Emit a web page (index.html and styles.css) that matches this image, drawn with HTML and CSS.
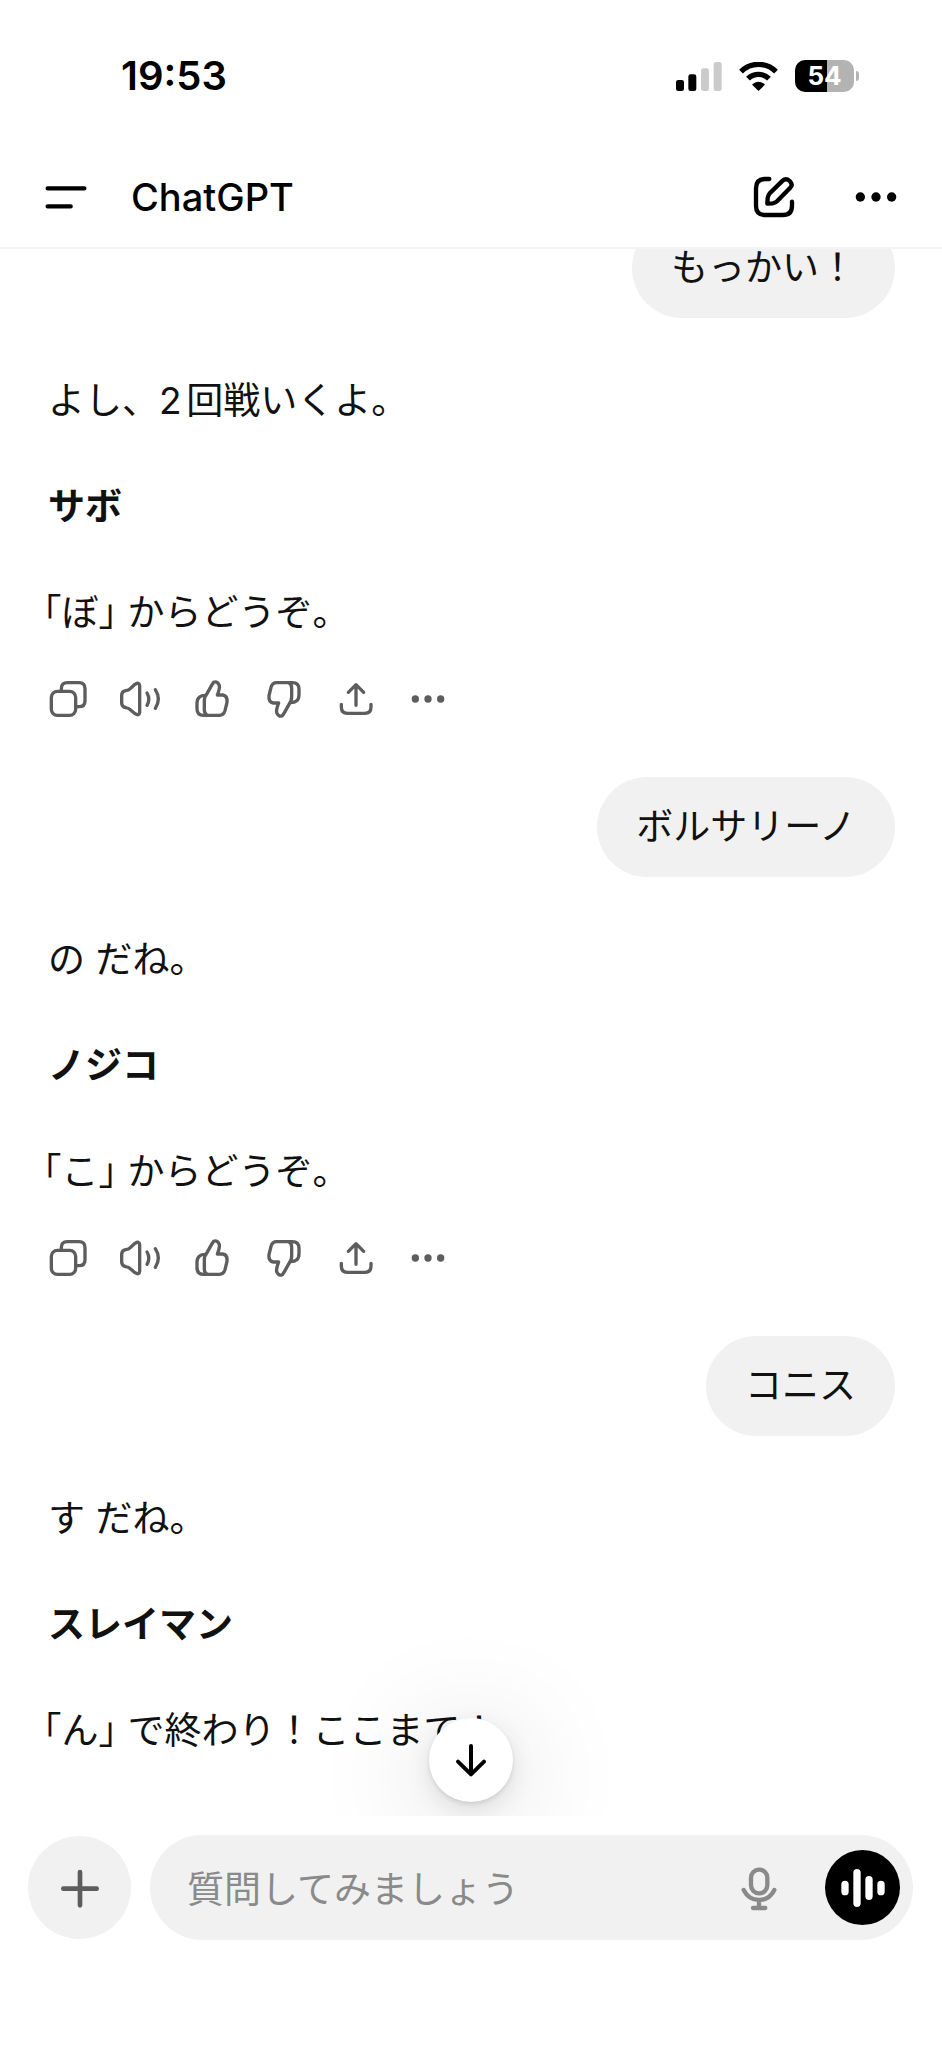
FILE: index.html
```html
<!DOCTYPE html>
<html lang="ja">
<head>
<meta charset="utf-8">
<meta name="viewport" content="width=device-width, initial-scale=1">
<title>ChatGPT</title>
<link rel="stylesheet" href="styles.css">
</head>
<body>
<svg class="sprite" aria-hidden="true">
  <symbol id="copy" viewBox="0 0 144 144"><rect x="22" y="49" width="73" height="72" rx="18"/><path d="M52 45V41Q52 23 70 23H105Q123 23 123 41V77Q123 95 105 95H99"/></symbol>
  <symbol id="speak" viewBox="0 0 144 144"><path d="M17 61Q17 49 29 47Q38 46 44 40L57 28Q70 20 71 32V112Q70 124 57 116L44 105Q38 99 29 98Q17 95 17 84Z"/><path d="M93 54Q104 72 93 91M118 44Q136 72 118 100"/></symbol>
  <symbol id="thumb" viewBox="0 0 144 144"><path d="M54 61Q27 60 27 85V101Q27 121 47 121H94Q107 121 111 107L117 82Q119 62 104 60H88Q96 40 94 31Q88 17 77 22L72 29L57 56Q49 65 49 78V105Q49 117 58 121"/></symbol>
  <symbol id="share" viewBox="0 0 144 144"><path d="M72 91V29M49 52L72 29L95 52M28 88V96Q28 115 46 115H99Q117 115 117 96V88"/></symbol>
  <symbol id="more" viewBox="0 0 144 144"><g fill="currentColor" stroke="none"><circle cx="34" cy="72" r="11"/><circle cx="72" cy="72" r="11"/><circle cx="110" cy="72" r="11"/></g></symbol>
</svg>

<header class="header">
  <div class="status">
    <time class="clock">19:53</time>
    <div class="indicators">
      <svg class="signal" viewBox="0 0 138 87"><g><rect y="54" width="24" height="33" rx="7"/><rect x="37" y="37" width="24" height="50" rx="7"/></g><g fill="#cbcbcb"><rect x="75" y="19" width="24" height="68" rx="7"/><rect x="113" width="24" height="87" rx="7"/></g></svg>
      <svg class="wifi" viewBox="0 0 117 87"><g fill="none" stroke="#000" stroke-width="16"><path d="M6 29A74 74 0 0 1 111 29"/><path d="M27 50A45 45 0 0 1 90 50"/></g><path d="M58.500 87L41 70Q38 67 42 65Q58.500 54 75 65Q79 67 76 70Z"/></svg>
      <div class="battery"><span class="level">54</span><span class="nub"></span></div>
    </div>
  </div>
  <nav class="nav">
    <button class="icon-button" aria-label="メニュー"><svg class="icon bold" viewBox="0 0 144 144"><path d="M17 46H127M17 100H86"/></svg></button>
    <h1 class="title">ChatGPT</h1>
    <button class="icon-button" aria-label="新しいチャット"><svg class="icon bold" viewBox="0 0 144 144"><path d="M58 18H46Q18 18 18 46V98Q18 126 46 126H98Q126 126 126 98V86"/><path d="M52 92L53 75Q54 66 60 60L98 23Q108 14 119 24Q130 35 120 45L84 82Q77 90 68 91Z"/></svg></button>
    <button class="icon-button" aria-label="その他"><svg class="icon" viewBox="0 0 144 144"><g fill="currentColor" stroke="none"><circle cx="25" cy="72" r="14"/><circle cx="72" cy="72" r="14"/><circle cx="119" cy="72" r="14"/></g></svg></button>
  </nav>
</header>

<main class="chat">
  <p class="bubble">もっかい！</p>
  <section class="reply">
    <p>よし、2回戦いくよ。</p>
    <p><strong>サボ</strong></p>
    <p class="quoted"><span class="quote">「ぼ」</span> からどうぞ。</p>
  </section>
  <div class="actions">
    <button class="icon-button" aria-label="コピー"><svg class="icon"><use href="#copy"/></svg></button>
    <button class="icon-button" aria-label="読み上げる"><svg class="icon"><use href="#speak"/></svg></button>
    <button class="icon-button" aria-label="良い回答"><svg class="icon"><use href="#thumb"/></svg></button>
    <button class="icon-button" aria-label="良くない回答"><svg class="icon flipped"><use href="#thumb"/></svg></button>
    <button class="icon-button" aria-label="共有"><svg class="icon"><use href="#share"/></svg></button>
    <button class="icon-button" aria-label="その他の操作"><svg class="icon"><use href="#more"/></svg></button>
  </div>
  <p class="bubble">ボルサリーノ</p>
  <section class="reply">
    <p>の だね。</p>
    <p><strong>ノジコ</strong></p>
    <p class="quoted"><span class="quote">「こ」</span> からどうぞ。</p>
  </section>
  <div class="actions">
    <button class="icon-button" aria-label="コピー"><svg class="icon"><use href="#copy"/></svg></button>
    <button class="icon-button" aria-label="読み上げる"><svg class="icon"><use href="#speak"/></svg></button>
    <button class="icon-button" aria-label="良い回答"><svg class="icon"><use href="#thumb"/></svg></button>
    <button class="icon-button" aria-label="良くない回答"><svg class="icon flipped"><use href="#thumb"/></svg></button>
    <button class="icon-button" aria-label="共有"><svg class="icon"><use href="#share"/></svg></button>
    <button class="icon-button" aria-label="その他の操作"><svg class="icon"><use href="#more"/></svg></button>
  </div>
  <p class="bubble">コニス</p>
  <section class="reply">
    <p>す だね。</p>
    <p><strong>スレイマン</strong></p>
    <p class="quoted"><span class="quote">「ん」</span> で終わり！ここまで！</p>
  </section>
  <button class="scroll-down" aria-label="一番下へ"><svg class="icon arrow" viewBox="0 0 144 144"><path d="M72 30V114M33 77L72 115L111 77"/></svg></button>
</main>

<form class="composer">
  <button class="add" type="button" aria-label="追加"><svg class="icon plus" viewBox="0 0 144 144"><path d="M72 24V124M22 74H122"/></svg></button>
  <div class="field">
    <input class="prompt" type="text" placeholder="質問してみましょう" aria-label="質問してみましょう">
    <button class="icon-button mic" type="button" aria-label="音声入力"><svg class="icon" viewBox="0 0 144 144"><rect x="48" y="17" width="49" height="71" rx="24"/><path d="M26 78C36 98 54 108 72 108S108 98 118 78M72 108V132M54 132H91"/></svg></button>
    <button class="voice" type="button" aria-label="音声モード"><svg class="icon wave" viewBox="0 0 144 144"><path d="M18 61V83M54 26V118M90 47V97M126 61V83"/></svg></button>
  </div>
</form>
</body>
</html>
```

FILE: styles.css
```css
* {
  box-sizing: border-box;
}

body {
  display: flex;
  flex-direction: column;
  height: 100vh;
  margin: 0;
  background: #fff;
  color: #111;
  font-family: Inter, "Noto Sans CJK JP", sans-serif;
  font-size: 37px;
  line-height: 60px;
  text-autospace: normal;
}

button {
  display: grid;
  place-items: center;
  flex: none;
  padding: 0;
  border: 0;
  background: none;
  color: inherit;
}

p,
h1 {
  margin: 0;
}

.sprite {
  position: absolute;
  width: 0;
  height: 0;
}

.icon {
  display: block;
  width: 48px;
  height: 48px;
  fill: none;
  stroke: currentColor;
  stroke-width: 10;
  stroke-linecap: round;
  stroke-linejoin: round;
}

.bold {
  stroke-width: 13;
}

.flipped {
  transform: rotate(180deg);
}

.header {
  flex: none;
  padding: 56px 42px 26px;
  border-bottom: 2px solid #f4f4f4;
  color: #000;
}

.status {
  display: flex;
  align-items: center;
  justify-content: space-between;
  height: 40px;
  margin-bottom: 77px;
  padding: 0 41px 0 79px;
}

.clock {
  font-size: 40px;
  font-weight: 600;
  line-height: 40px;
}

.indicators {
  display: flex;
  align-items: center;
  gap: 17px;
}

.signal {
  width: 46px;
  height: 29px;
}

.wifi {
  width: 39px;
  height: 29px;
}

.battery {
  display: flex;
  align-items: center;
  gap: 2px;
}

.level {
  width: 59px;
  height: 32px;
  border-radius: 10px;
  background: linear-gradient(to right, #000 54%, #b3b3b3 54%);
  color: #fff;
  font-size: 26px;
  font-weight: 700;
  line-height: 32px;
  text-align: center;
}

.nub {
  width: 3px;
  height: 10px;
  border-radius: 0 3px 3px 0;
  background: #b3b3b3;
}

.nav {
  display: flex;
  align-items: center;
  height: 48px;
}

.title {
  flex: 1;
  padding-left: 41px;
  font-size: 38px;
  font-weight: 500;
  line-height: 48px;
}

.nav .icon-button:last-child {
  margin-left: 54px;
}

.chat {
  position: relative;
  display: flex;
  flex: 1;
  flex-direction: column;
  justify-content: flex-end;
  min-height: 0;
  padding: 0 47px 55px 48px;
  overflow: hidden;
}

.bubble {
  flex: none;
  align-self: flex-end;
  padding: 20px 39px;
  border-radius: 50px;
  background: #f1f1f1;
}

.reply {
  display: flex;
  flex: none;
  flex-direction: column;
  gap: 46px;
  margin-top: 53px;
}

.quoted {
  margin-left: -5px;
}

.quote {
  font-feature-settings: "halt";
}

.actions {
  display: flex;
  flex: none;
  gap: 24px;
  margin: 32px 0 54px -4px;
  color: #5d5d5d;
}

.scroll-down {
  position: absolute;
  right: 0;
  bottom: 14px;
  left: 0;
  width: 84px;
  height: 84px;
  margin: 0 auto;
  border-radius: 50%;
  background: #fff;
  box-shadow: 0 2px 4px rgba(0, 0, 0, 0.1), 0 8px 24px rgba(0, 0, 0, 0.1), 0 16px 120px rgba(0, 0, 0, 0.2);
  color: #000;
}

.arrow {
  stroke-width: 12;
}

.composer {
  display: flex;
  flex: none;
  align-items: center;
  gap: 19px;
  padding: 19px 29px 108px 28px;
}

.add {
  width: 103px;
  height: 103px;
  border-radius: 50%;
  background: #f1f1f1;
  color: #5d5d5d;
}

.plus {
  stroke-width: 14;
}

.field {
  display: flex;
  flex: 1;
  align-items: center;
  min-width: 0;
  height: 105px;
  padding: 0 13px 0 37px;
  border-radius: 53px;
  background: #f1f1f1;
}

.prompt {
  flex: 1;
  min-width: 0;
  height: 64px;
  padding: 4px 0 0;
  border: 0;
  outline: 0;
  background: none;
  color: #111;
  font: inherit;
}

.prompt::placeholder {
  color: #8a8a8a;
  opacity: 1;
}

.mic {
  margin-right: 42px;
  color: #8a8a8a;
}

.mic .icon {
  stroke-width: 13;
}

.voice {
  width: 75px;
  height: 75px;
  border-radius: 50%;
  background: #000;
  color: #fff;
}

.wave {
  stroke-width: 22;
}
```
